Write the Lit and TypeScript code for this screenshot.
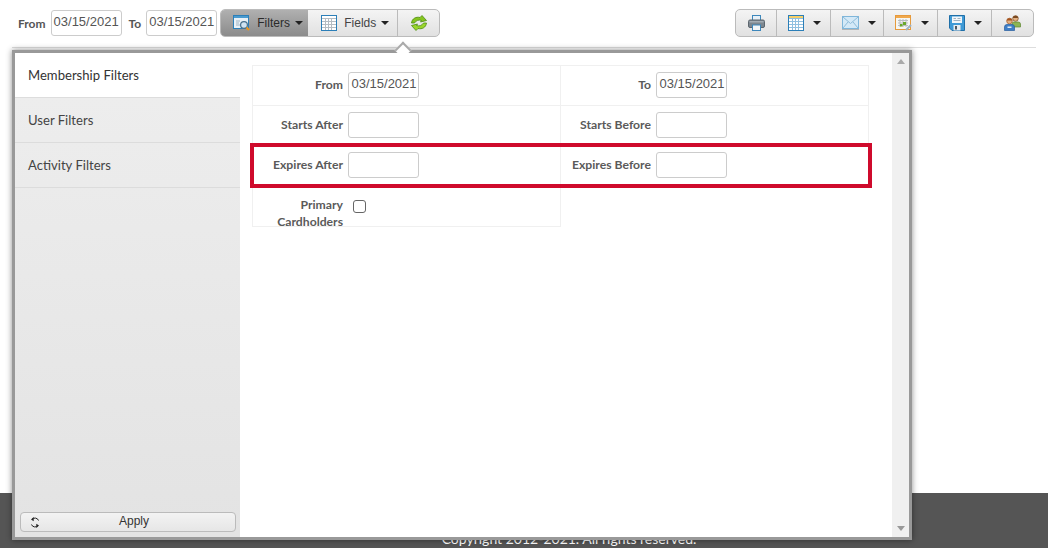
import { LitElement, html, css, svg } from "lit";
import { customElement } from "lit/decorators.js";

const gridIcon = (hdr: string, line: string) => html`<svg width="16" height="16" viewBox="0 0 16 16">
  <rect x=".5" y=".5" width="15" height="15" fill="#fff" stroke="#2c7fb8"/>
  <rect x="1" y="1" width="14" height="2.500" fill="${hdr}"/>
  ${[4.5, 7.5, 10.5].map((x) => svg`<path d="M${x} 3.500V15" stroke="${line}"/>`)}
  ${[3.5, 6.5, 9.5, 12.5].map((y) => svg`<path d="M1 ${y}H15" stroke="${line}"/>`)}
</svg>`;

const filterIcon = html`<svg width="18" height="16" viewBox="0 0 18 16">
  <rect x=".5" y=".5" width="15" height="13" fill="#e9f1f7" stroke="#2c7fb8"/>
  <rect x="1" y="1" width="14" height="2" fill="#4a9bd0"/>
  <path d="M3 6h4M3 8h3M3 10h4" stroke="#9fb3c2"/>
  <circle cx="11" cy="10" r="3.400" fill="#cfe3f2" stroke="#47708c" stroke-width="1.200"/>
  <path d="M13.500 12.500L16 15" stroke="#e8951f" stroke-width="2.200"/>
</svg>`;

const refreshArrow = "M1.5 8C2 3.500 6 1.500 10 2.500L12 .5L16.500 5.500L10.500 7L11.500 5.500C8.500 4.500 6 5.500 4.500 8Z";
const refreshIcon = html`<svg width="18" height="16" viewBox="0 0 18 16">
  <path d="${refreshArrow}" fill="#86c51f" stroke="#4d8c12" stroke-width=".8"/>
  <path d="${refreshArrow}" transform="rotate(180 9 8)" fill="#9ad62c" stroke="#4d8c12" stroke-width=".8"/>
</svg>`;

const printIcon = html`<svg width="17" height="16" viewBox="0 0 17 16">
  <rect x="4.500" y=".5" width="8" height="5" fill="#e8f1f8" stroke="#3d87bb"/>
  <rect x=".5" y="5" width="16" height="7.500" rx="1.500" fill="#7d8790" stroke="#5d666e"/>
  <rect x="1.500" y="6" width="14" height="1.500" fill="#a4adb4"/>
  <rect x="4.500" y="10" width="8" height="5.500" fill="#f2f6f9" stroke="#3d87bb"/>
</svg>`;

const mailIcon = html`<svg width="17" height="14" viewBox="0 0 17 14">
  <rect x=".5" y=".5" width="16" height="12" fill="#d4e9f7" stroke="#7fb6da"/>
  <path d="M1 1L8.500 7.500L16 1M1 12L6 6M16 12L11 6" fill="none" stroke="#8fbcd9"/>
  <path d="M0 13.500H17" stroke="#b5b5b5"/>
</svg>`;

const calIcon = html`<svg width="17" height="16" viewBox="0 0 17 16">
  <rect x=".5" y=".5" width="15" height="14" fill="#f6f6f2" stroke="#e69a3c"/>
  <rect x="1" y="1" width="14" height="2" fill="#f0a84c"/>
  <path d="M3 5.500H13M3 8H13M3 10.500H13M5 4V12M8 4V12M11 4V12" stroke="#b9bdc0"/>
  <rect x="8" y="7" width="3" height="3" fill="#6aa82a"/>
  <rect x="5" y="9" width="2.500" height="2.500" fill="#6aa82a"/>
  <path d="M11 15L16 10" stroke="#9fb3c2" stroke-width="2"/>
</svg>`;

const saveIcon = html`<svg width="16" height="16" viewBox="0 0 16 16">
  <path d="M.5.5H15.500V15.500H3L.5 13Z" fill="#3f9ad6" stroke="#1f6fa8"/>
  <rect x="3" y="1.500" width="10" height="6.500" fill="#f2f6f9"/>
  <path d="M4.500 3.500H7M8.500 3.500H11.500M4.500 5.500H11.500" stroke="#9fb3c2"/>
  <rect x="4.500" y="10" width="7" height="5.500" fill="#e8edf1"/>
  <rect x="6" y="11" width="2" height="3.500" fill="#4d5a64"/>
</svg>`;

const usersIcon = html`<svg width="17" height="16" viewBox="0 0 17 16">
  <circle cx="11.500" cy="3.500" r="2.800" fill="#e2b183" stroke="#7b4a22" stroke-width=".7"/>
  <path d="M11.500.700a2.800 2.800 0 0 1 2.800 2.400h-5.600a2.800 2.800 0 0 1 2.800-2.400Z" fill="#7b4a22"/>
  <path d="M8 12V9Q8 7 10 7H14Q16.500 7 16.500 9V12Z" fill="#8db554" stroke="#5f8732" stroke-width=".7"/>
  <circle cx="5.500" cy="6" r="2.800" fill="#e2b183" stroke="#a3541f" stroke-width=".7"/>
  <path d="M5.500 3.200a2.800 2.800 0 0 1 2.800 2.400H2.700a2.800 2.800 0 0 1 2.800-2.400Z" fill="#a3541f"/>
  <path d="M.5 15.500V12Q.5 9.500 3 9.500H8Q10.500 9.500 10.500 12V15.500Z" fill="#3f7fc7" stroke="#265d9c" stroke-width=".7"/>
  <rect x="3.500" y="11.500" width="4" height="1.500" fill="#e4eef8"/>
</svg>`;

const applyIcon = html`<svg width="10" height="11" viewBox="0 0 10 11">
  <path d="M8.500 3.500A3.700 3.700 0 0 0 2 2.600M1.500 7.500A3.700 3.700 0 0 0 8 8.400" fill="none" stroke="#222"/>
  <path d="M3.700 0V4.200L1 2.600ZM6.300 11V6.800L9 8.400Z" fill="#222"/>
</svg>`;

@customElement("app-root")
export class AppRoot extends LitElement {
  static styles = css`
    :host {
      display: flex;
      flex-direction: column;
      position: relative;
      height: 548px;
      overflow: hidden;
      background: #fff;
      font-family: Lato, "Liberation Sans", sans-serif;
      color: #555;
    }
    .toolbar {
      padding: 9px 2px 0 6px;
      box-sizing: content-box;
      height: 38px;
      margin: 0 12px;
      border-bottom: 1px solid #ddd;
      display: flex;
      justify-content: space-between;
      align-items: flex-start;
    }
    .left { display: flex; align-items: flex-start; }
    .tb-label { font-size: 12px; font-weight: 700; margin-top: 7px; line-height: 15px; }
    .tb-label.from { margin-right: 5px; }
    .tb-label.to { margin: 7px 5px 0 7px; }
    .date {
      box-sizing: border-box;
      width: 71px;
      height: 26px;
      border: 1px solid #ccc;
      border-radius: 3px;
      background: #fff;
      font: 13px/20px "Liberation Sans", Arial, sans-serif;
      color: #555;
      padding: 0 0 3px 2px;
      display: flex;
      align-items: center;
      white-space: nowrap;
    }
    .tb-date { margin-top: 1px; }
    .group {
      display: flex;
      height: 28px;
      box-sizing: border-box;
      border: 1px solid #bbb;
      border-radius: 5px;
      background: linear-gradient(#f4f4f4, #e1e1e1);
      overflow: hidden;
    }
    .filters-group { margin-left: 3px; }
    .seg {
      display: flex;
      align-items: center;
      justify-content: flex-start;
      box-sizing: border-box;
      border-left: 1px solid #bbb;
      font: 12px "Liberation Sans", Arial, sans-serif;
      color: #444;
    }
    .seg:first-child { border-left: 0; }
    .seg.active { background: linear-gradient(#b0b0b0, #8b8b8b); color: #2a2a2a; border-left: 0; }
    .seg .txt { margin: 0 5px 0 6px; }
    .caret {
      width: 0;
      height: 0;
      border-left: 4px solid transparent;
      border-right: 4px solid transparent;
      border-top: 4px solid #222;
    }
    .s-filters { width: 87px; padding-left: 12px; }
    .s-fields { width: 89px; border-left: 0; padding-left: 13px; }
    .s-fields .txt { margin: 0 5px 0 7px; }
    .s-refresh { width: 42px; justify-content: center; }
    .right .seg { gap: 9px; padding-left: 11px; }
    .right .seg.center { padding-left: 0; justify-content: center; }
    .r1 { width: 40px; }
    .r2 { width: 54px; }
    .r3 { width: 53px; }
    .r4 { width: 54px; }
    .r5 { width: 54px; }
    .r6 { width: 42px; }

    main { flex: 1; }
    footer {
      height: 55px;
      background: #555;
      color: #fff;
      font-size: 14px;
      text-align: center;
      box-sizing: border-box;
      padding: 37px 0 0 90px;
      line-height: 17px;
    }

    .notch {
      position: absolute;
      left: 397px;
      top: 44px;
      width: 12px;
      height: 12px;
      transform: rotate(45deg);
      background: #fff;
      border-left: 2px solid #aaa;
      border-top: 2px solid #aaa;
      box-sizing: border-box;
      z-index: 2;
    }
    .panel {
      position: absolute;
      left: 12px;
      top: 50px;
      width: 900px;
      height: 490px;
      box-sizing: border-box;
      border: 3px solid #999;
      background: #fff;
      box-shadow: 0 0 6px rgba(0, 0, 0, 0.45);
      display: flex;
      z-index: 1;
    }
    .side {
      width: 225px;
      background: linear-gradient(#eeeeee, #e3e3e3);
      display: flex;
      flex-direction: column;
    }
    .tab {
      height: 45px;
      box-sizing: border-box;
      padding-left: 13px;
      font-size: 13.100px;
      line-height: 44px;
      color: #444;
      border-bottom: 1px solid #dcdcdc;
    }
    .tab.on { background: #fff; color: #333; border-bottom: 1px solid #ddd; }
    .spacer { flex: 1; }
    .apply {
      margin: 0 4px 5px 5px;
      height: 20px;
      box-sizing: border-box;
      border: 1px solid #bbb;
      border-radius: 4px;
      background: linear-gradient(#f3f3f3, #e6e6e6);
      display: grid;
      grid-template-columns: 24px 1fr 12px;
      align-items: center;
      font: 12px "Liberation Sans", Arial, sans-serif;
      color: #333;
    }
    .apply svg { margin-left: 9px; }
    .apply span { text-align: center; margin-top: -2px; }
    .content {
      flex: 1;
      padding: 12px 23px 0 12px;
      position: relative;
    }
    .table {
      position: relative;
      display: grid;
      grid-template-columns: 309px 308px;
      grid-auto-rows: 40px;
      border-top: 1px solid #f0f0f0;
      width: 617px;
    }
    .cell {
      box-sizing: border-box;
      display: flex;
      align-items: center;
      border-left: 1px solid #f0f0f0;
      border-right: 1px solid #f0f0f0;
      border-bottom: 1px solid #f0f0f0;
      height: 40px;
    }
    .cell:nth-child(2n) { border-left: 0; }
    .cell.tall { height: 41px; }
    .lbl {
      width: 90px;
      text-align: right;
      font-size: 12.200px;
      font-weight: 700;
      line-height: 17px;
      margin-top: -3px;
      color: #5a5a5a;
      flex: none;
    }
    .tall .lbl { margin-top: 13px; }
    .cell .date { margin-left: 5px; flex: none; margin-top: -1px; padding-left: 2.500px; }
    .cb {
      width: 13px;
      height: 13px;
      box-sizing: border-box;
      border: 1px solid #666;
      border-radius: 3px;
      background: #fff;
      margin: 0 0 0 10px;
    }
    .highlight {
      position: absolute;
      left: -2px;
      top: 77px;
      width: 622px;
      height: 45px;
      box-sizing: border-box;
      border: 4px solid #cf0a2c;
      pointer-events: none;
    }
    .scroll {
      width: 17px;
      background: #f0f0f0;
      display: flex;
      flex-direction: column;
      justify-content: space-between;
      align-items: center;
      padding: 6px 0;
      box-sizing: border-box;
    }
    .up, .down { width: 0; height: 0; border-left: 4px solid transparent; border-right: 4px solid transparent; }
    .up { border-bottom: 5px solid #aaa; }
    .down { border-top: 5px solid #999; }
  `;

  private row(label: string, value = "") {
    return html`<div class="cell"><div class="lbl">${label}</div><div class="date">${value}</div></div>`;
  }

  render() {
    return html`
      <div class="toolbar">
        <div class="left">
          <span class="tb-label from">From</span>
          <div class="date tb-date">03/15/2021</div>
          <span class="tb-label to">To</span>
          <div class="date tb-date">03/15/2021</div>
          <div class="group filters-group">
            <div class="seg active s-filters">${filterIcon}<span class="txt">Filters</span><i class="caret"></i></div>
            <div class="seg s-fields">${gridIcon("#fff", "#b5bcc2")}<span class="txt">Fields</span><i class="caret"></i></div>
            <div class="seg s-refresh">${refreshIcon}</div>
          </div>
        </div>
        <div class="group right">
          <div class="seg center r1">${printIcon}</div>
          <div class="seg r2">${gridIcon("#f5cf6a", "#8fc0e0")}<i class="caret"></i></div>
          <div class="seg r3">${mailIcon}<i class="caret"></i></div>
          <div class="seg r4">${calIcon}<i class="caret"></i></div>
          <div class="seg r5">${saveIcon}<i class="caret"></i></div>
          <div class="seg center r6">${usersIcon}</div>
        </div>
      </div>
      <main></main>
      <footer>Copyright 2012-2021. All rights reserved.</footer>
      <div class="notch"></div>
      <div class="panel">
        <div class="side">
          <div class="tab on">Membership Filters</div>
          <div class="tab">User Filters</div>
          <div class="tab">Activity Filters</div>
          <div class="spacer"></div>
          <div class="apply">${applyIcon}<span>Apply</span></div>
        </div>
        <div class="content">
          <div class="table">
            ${this.row("From", "03/15/2021")}
            ${this.row("To", "03/15/2021")}
            ${this.row("Starts After")}
            ${this.row("Starts Before")}
            ${this.row("Expires After")}
            ${this.row("Expires Before")}
            <div class="cell tall"><div class="lbl">Primary Cardholders</div><div class="cb"></div></div>
            <div class="highlight"></div>
          </div>
        </div>
        <div class="scroll"><i class="up"></i><i class="down"></i></div>
      </div>
    `;
  }
}
